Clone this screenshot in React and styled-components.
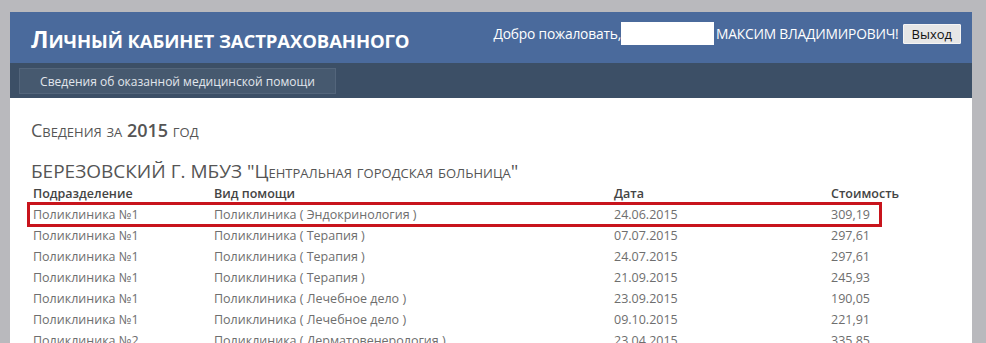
import React from 'react';
import styled, { createGlobalStyle } from 'styled-components';

const GlobalStyle = createGlobalStyle`
  html, body {
    margin: 0;
    padding: 0;
    background: #b9b9bd;
    font-family: "Open Sans", "Noto Sans", sans-serif;
    overflow: hidden;
  }
`;

const Page = styled.div`
  width: 962px;
  margin: 12px 0 0 10px;
  background: #fff;
  min-height: 331px;
`;

const Header = styled.header`
  height: 51px;
  background: #4a6a9c;
  display: flex;
  align-items: center;
  justify-content: space-between;
  padding: 0 11px 0 21px;
`;

const Title = styled.h1`
  margin: 0;
  color: #fff;
  font-size: 18.5px;
  font-weight: 700;
  text-transform: uppercase;
  letter-spacing: -0.1px;
  line-height: 1;
  padding-top: 4px;

  &::first-letter {
    font-size: 23.5px;
  }
`;

const UserBar = styled.div`
  display: flex;
  align-items: center;
  color: #fff;
  font-size: 13.8px;
  letter-spacing: -0.2px;
  padding-bottom: 8px;
`;

const Mask = styled.span`
  display: inline-block;
  width: 93px;
  height: 23px;
  background: #fff;
  margin: 0 2px 0 0;
`;

const LogoutButton = styled.button`
  margin-left: 4px;
  height: 20px;
  padding: 0 8px;
  background: #e6e6e6;
  border: 1px solid #f4f4f4;
  border-radius: 1px;
  font-family: "Open Sans", sans-serif;
  font-size: 13px;
  color: #111;
  line-height: 18px;
`;

const Nav = styled.nav`
  height: 35px;
  background: #3c4f66;
  padding: 5px 9px 0;
  box-sizing: border-box;
`;

const NavItem = styled.div`
  width: 317px;
  height: 26px;
  box-sizing: border-box;
  background: #46596f;
  border: 1px solid #53657b;
  color: #e2e6ec;
  font-size: 12px;
  display: flex;
  align-items: center;
  justify-content: center;
`;

const Content = styled.main`
  padding: 20px 0 0 21px;
  color: #555;
`;

const SectionTitle = styled.h2`
  margin: 0;
  font-size: 18px;
  font-weight: 400;
  font-variant: small-caps;
  line-height: 24px;
  color: #555;
`;

const Year = styled.span`
  font-weight: 600;
`;

const Hospital = styled.h3`
  margin: 17px 0 0;
  font-size: 19px;
  font-weight: 400;
  font-variant: small-caps;
  line-height: 24px;
  color: #555;
`;

const Table = styled.div`
  width: 851px;
  margin-left: -2px;
`;

const Row = styled.div`
  display: grid;
  grid-template-columns: 181px 400px 217px 1fr;
  height: 21px;
  align-items: center;
  padding-left: 4px;
  font-size: 12.5px;
  color: ${(p) => (p.head ? '#444' : '#6e6e6e')};
  font-weight: ${(p) => (p.head ? 600 : 400)};
  outline: ${(p) => (p.marked ? '3px solid #c8141c' : 'none')};
  outline-offset: -1px;
`;

const rows = [
  ['Поликлиника №1', 'Поликлиника ( Эндокринология )', '24.06.2015', '309,19'],
  ['Поликлиника №1', 'Поликлиника ( Терапия )', '07.07.2015', '297,61'],
  ['Поликлиника №1', 'Поликлиника ( Терапия )', '24.07.2015', '297,61'],
  ['Поликлиника №1', 'Поликлиника ( Терапия )', '21.09.2015', '245,93'],
  ['Поликлиника №1', 'Поликлиника ( Лечебное дело )', '23.09.2015', '190,05'],
  ['Поликлиника №1', 'Поликлиника ( Лечебное дело )', '09.10.2015', '221,91'],
  ['Поликлиника №2', 'Поликлиника ( Дерматовенерология )', '23.04.2015', '335,85'],
];

const App = () => (
  <>
    <GlobalStyle />
    <Page>
      <Header>
        <Title>Личный кабинет застрахованного</Title>
        <UserBar>
          Добро пожаловать,<Mask />МАКСИМ ВЛАДИМИРОВИЧ!
          <LogoutButton>Выход</LogoutButton>
        </UserBar>
      </Header>
      <Nav>
        <NavItem>Сведения об оказанной медицинской помощи</NavItem>
      </Nav>
      <Content>
        <SectionTitle>
          Сведения за <Year>2015</Year> год
        </SectionTitle>
        <Hospital>БЕРЕЗОВСКИЙ Г. МБУЗ "Центральная городская больница"</Hospital>
        <Table>
          <Row head>
            <span>Подразделение</span>
            <span>Вид помощи</span>
            <span>Дата</span>
            <span>Стоимость</span>
          </Row>
          {rows.map((r, i) => (
            <Row key={i} marked={i === 0}>
              {r.map((c, j) => (
                <span key={j}>{c}</span>
              ))}
            </Row>
          ))}
        </Table>
      </Content>
    </Page>
  </>
);

export default App;
